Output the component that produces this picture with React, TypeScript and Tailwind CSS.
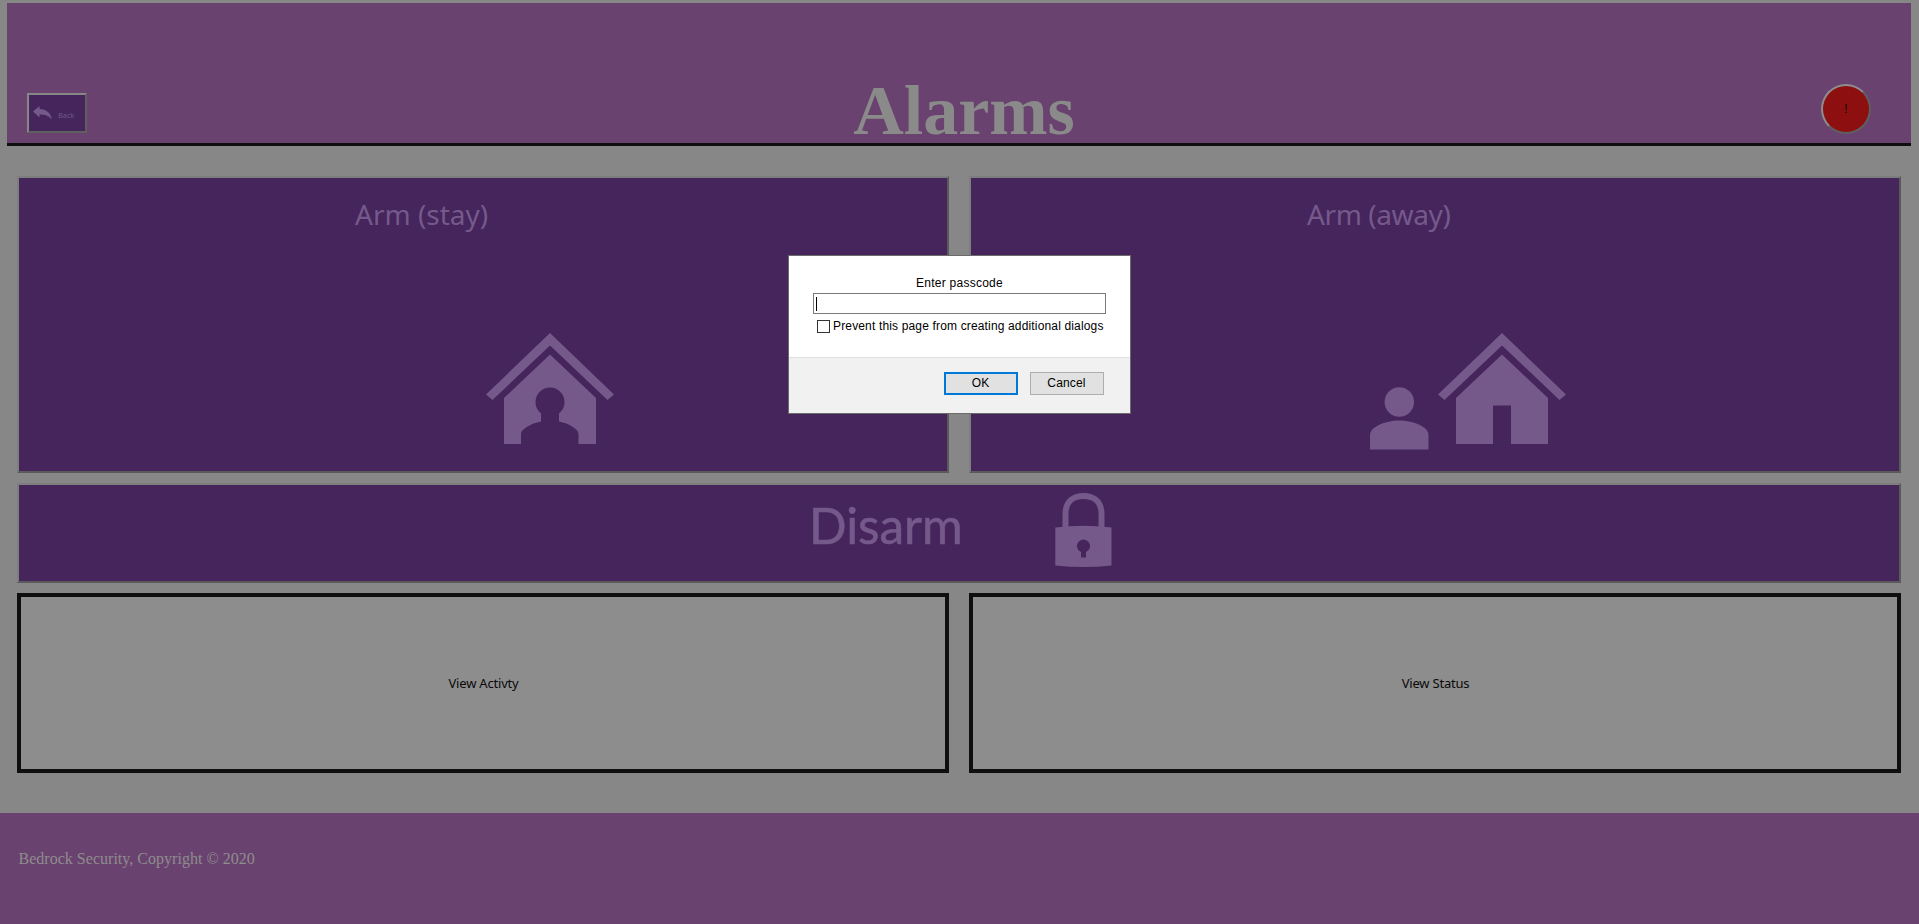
import type { ReactNode } from "react";

const House = ({ children }: { children?: ReactNode }) => (
  <>
    <path d="M64 0 L128 61.5 L121.5 67 L64 12.5 L6.5 67 L0 61.5 Z" />
    <path d="M64 21.5 L110 65 V111 H18 V65 Z" />
    {children}
  </>
);

const Card = ({ title, children, titleClass }: { title: string; children: ReactNode; titleClass: string }) => (
  <button className="flex h-[297px] w-[932px] flex-col items-start border-2 border-t-[#7e7e7e] border-l-[#7e7e7e] border-r-[#5a5a5a] border-b-[#5a5a5a] bg-[#45255c] text-[#75598b]">
    <span className={titleClass}>{title}</span>
    {children}
  </button>
);

export default function App() {
  return (
    <div className="relative flex h-[924px] w-[1919px] flex-col overflow-hidden bg-[#878787] font-['Liberation_Serif',serif]">
      <header className="mt-[3px] ml-[7px] flex h-[143px] w-[1904px] shrink-0 items-end justify-between border-b-[3px] border-[#0f0f0f] bg-[#6a4270] pl-5 pr-[40.5px]">
        <button className="mb-2.5 flex h-10 w-15 border-2 border-t-[#878787] border-l-[#878787] border-r-[#5f5f5f] border-b-[#5f5f5f] bg-[#45255c] text-[#75598b]">
          <svg className="mt-[11px] ml-1 h-[14px] w-[19px] shrink-0" viewBox="0 0 19 14" fill="currentColor">
            <path d="M0 5.500 L6.500 0 V3 C13 3 17.500 6.500 19 13.500 C15.500 9.500 12 8.500 6.500 8.500 V11.500 Z" />
          </svg>
          <span className="mt-[15px] ml-[6px] font-['Open_Sans',sans-serif] text-[7.5px] leading-[10px]">Back</span>
        </button>
        <h1 className="mr-[-20px] text-[70px] leading-[64px] font-bold text-[#8a8a8a]">Alarms</h1>
        <button className="mb-[9.5px] flex size-[49.5px] items-center justify-center rounded-full border-2 border-t-[#8d8d8d] border-l-[#8d8d8d] border-r-[#5f5f5f] border-b-[#5f5f5f] bg-[#8d0f0f] font-['Liberation_Sans',sans-serif] text-[13px] text-[#0f0f0f]">
          !
        </button>
      </header>

      <main className="mt-[30px] ml-[17px] flex w-[1884px] shrink-0 flex-col gap-2.5">
        <div className="flex gap-5">
          <Card title="Arm (stay)" titleClass="ml-[336px] mt-[17px] font-['Noto_Sans',sans-serif] text-[28px] leading-[38px]">
            <svg className="mt-[100.3px] ml-[467px] h-[112px] w-[129px]" viewBox="0 0 129 112" fill="currentColor">
              <House>
                <g fill="#45255c">
                  <circle cx="64" cy="69" r="14.5" />
                  <path d="M55 78 H73 V88.500 C83 90.500 92.500 96 92.500 101 V112 H35 V101 C35 96 45 90.500 55 88.500 Z" />
                </g>
              </House>
            </svg>
          </Card>
          <Card title="Arm (away)" titleClass="ml-[336px] mt-[17px] font-['Noto_Sans',sans-serif] text-[28px] leading-[38px] tracking-[-0.4px]">
            <svg className="mt-[100.3px] ml-[399px] h-[117px] w-[197px]" viewBox="0 0 197 117" fill="currentColor">
              <circle cx="29.300" cy="69" r="14.700" />
              <path d="M0 116.500 V102 C0 94 15 87.500 29.300 87.500 S58.500 94 58.500 102 V116.500 Z" />
              <g transform="translate(68 0)">
                <House>
                  <path d="M55 72.500 H73 V112 H55 Z" fill="#45255c" />
                </House>
              </g>
            </svg>
          </Card>
        </div>
        <button className="flex h-[100px] w-full items-start border-2 border-t-[#7e7e7e] border-l-[#7e7e7e] border-r-[#5a5a5a] border-b-[#5a5a5a] bg-[#45255c] text-[#75598b]">
          <span className="mt-[6px] ml-[790px] w-[246px] text-left font-['Lato',sans-serif] text-[49.5px] leading-[68px] [-webkit-text-stroke:0.6px_#75598b]">Disarm</span>
          <svg className="mt-2 h-[75px] w-[58px]" viewBox="0 0 58 75" fill="currentColor">
            <path d="M10.500 36 V21 C10.500 8 19 3 28.500 3 S46.500 8 46.500 21 V36" fill="none" stroke="currentColor" strokeWidth="6" />
            <path d="M0.300 34.500 Q28.500 31 56.500 34.500 V72.500 Q28.500 75.500 0.300 72.500 Z" />
            <path d="M26 64.500 V59 A6.500 6.500 0 1 1 31 59 V64.500 Z" fill="#45255c" />
          </svg>
        </button>
        <div className="flex gap-5">
          {["View Activty", "View Status"].map((label) => (
            <button key={label} className="h-[180px] w-[932px] border-4 border-[#0f0f0f] bg-[#8d8d8d] pt-0.5 pl-px font-['Noto_Sans',sans-serif] text-[13px] tracking-[-0.2px] text-[#0a0a0a]">
              {label}
            </button>
          ))}
        </div>
      </main>

      <footer className="mt-10 h-[111px] shrink-0 bg-[#6a4270] pt-[37px] pl-[18.5px] text-[16px] leading-[18px] tracking-[0.02px] text-[#8d8d8d]">
        Bedrock Security, Copyright © 2020
      </footer>

      <div className="absolute top-[255px] left-[788px] flex h-[159px] w-[343px] flex-col border border-[#6b6b6b] bg-white font-['Liberation_Sans',sans-serif] text-[12px] leading-[14px] tracking-[0.155px] text-black">
        <div className="flex h-[101px] flex-col items-center pt-5">
          <div className="tracking-[0.25px]">Enter passcode</div>
          <div className="mt-[3px] flex h-[21px] w-[293px] items-center border border-[#7a7a7a] pl-0.5">
            <span className="h-[14px] w-px bg-black" />
          </div>
          <label className="mt-[5px] flex w-[285px] items-center gap-[3px] whitespace-nowrap">
            <span className="size-[13px] shrink-0 border border-[#333333]" />
            Prevent this page from creating additional dialogs
          </label>
        </div>
        <div className="flex flex-1 justify-end gap-3 border-t border-[#dfdfdf] bg-[#f1f1f1] pt-[14px] pr-[26px]">
          <button className="h-[23px] w-[74px] border-2 border-[#0078d7] bg-[#e1e1e1] pr-px pb-0.5">OK</button>
          <button className="h-[23px] w-[74px] border border-[#adadad] bg-[#e1e1e1] pr-px pb-0.5">Cancel</button>
        </div>
      </div>
    </div>
  );
}
